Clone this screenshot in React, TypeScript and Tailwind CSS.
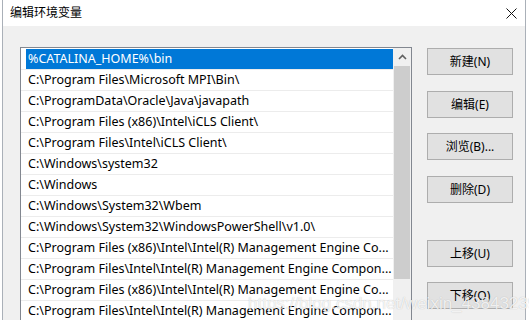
import React from 'react';

const rows = [
  '%CATALINA_HOME%\\bin',
  'C:\\Program Files\\Microsoft MPI\\Bin\\',
  'C:\\ProgramData\\Oracle\\Java\\javapath',
  'C:\\Program Files (x86)\\Intel\\iCLS Client\\',
  'C:\\Program Files\\Intel\\iCLS Client\\',
  'C:\\Windows\\system32',
  'C:\\Windows',
  'C:\\Windows\\System32\\Wbem',
  'C:\\Windows\\System32\\WindowsPowerShell\\v1.0\\',
  'C:\\Program Files (x86)\\Intel\\Intel(R) Management Engine Co...',
  'C:\\Program Files\\Intel\\Intel(R) Management Engine Compon...',
  'C:\\Program Files (x86)\\Intel\\Intel(R) Management Engine Co...',
  'C:\\Program Files\\Intel\\Intel(R) Management Engine Compon...',
];

const buttons = [
  { label: '新建(N)', mt: 'mt-[1px]' },
  { label: '编辑(E)', mt: 'mt-[16px]' },
  { label: '浏览(B)...', mt: 'mt-[15px]' },
  { label: '删除(D)', mt: 'mt-[16px]' },
  { label: '上移(U)', mt: 'mt-[37px]' },
  { label: '下移(O)', mt: 'mt-[15px]' },
];

const font = { fontFamily: '"Noto Sans", "Noto Sans CJK SC", sans-serif' };

export default function App() {
  return (
    <div className="relative w-[529px] h-[320px] overflow-hidden bg-white pl-[2px]" style={font}>
      <div className="w-[524px] h-[320px] border-l border-r border-[#aab0b8] flex flex-col">
        {/* title bar */}
        <div className="h-[26px] bg-white flex items-center justify-between pl-[7px] pr-[8px] shrink-0">
          <span className="text-[12px] text-black leading-none">编辑环境变量</span>
          <svg width="11" height="11" viewBox="0 0 11 11" className="mt-[1px]">
            <path d="M0.5 0.5 L10.5 10.5 M10.5 0.5 L0.5 10.5" stroke="#111" strokeWidth="1" />
          </svg>
        </div>

        {/* body */}
        <div className="flex-1 bg-[#f0f0f0] flex items-start pt-[21px] pl-[17px]">
          {/* list box */}
          <div className="w-[392px] h-[300px] border border-[#828790] bg-white flex">
            <div className="w-[372px] pt-[1px]">
              {rows.map((r, i) => (
                <div key={i} className="h-[21px] border-b border-[#ececec]">
                  {i === 0 ? (
                    <div className="ml-[5px] h-[20px] bg-[#0078d7] text-white text-[12.5px] leading-[20px] pl-[2px] whitespace-nowrap">
                      {r}
                    </div>
                  ) : (
                    <div className="ml-[5px] h-[20px] text-black text-[12.5px] leading-[20px] pl-[2px] whitespace-nowrap overflow-hidden">
                      {r}
                    </div>
                  )}
                </div>
              ))}
            </div>
            {/* scrollbar */}
            <div className="w-[18px] bg-[#f0f0f0] flex flex-col">
              <div className="h-[18px] flex items-center justify-center">
                <svg width="9" height="6" viewBox="0 0 9 6">
                  <path d="M1 5 L4.5 1.5 L8 5" stroke="#606060" strokeWidth="1.6" fill="none" />
                </svg>
              </div>
              <div className="mx-[1px] h-[213px] bg-[#cdcdcd]" />
            </div>
          </div>

          {/* buttons */}
          <div className="ml-[15px] flex flex-col">
            {buttons.map((b) => (
              <div
                key={b.label}
                className={`${b.mt} w-[86px] h-[27px] bg-[#e1e1e1] border border-[#adadad] flex items-center justify-center text-[12px] text-black`}
              >
                {b.label}
              </div>
            ))}
          </div>
        </div>
      </div>

      {/* watermark */}
      <div
        className="absolute left-[248px] top-[291px] text-[17px] text-white/80 whitespace-nowrap"
        style={{ fontFamily: '"Liberation Sans", Arial, sans-serif', textShadow: '0 0 1px rgba(0,0,0,0.25)' }}
      >
        https://blog.csdn.net/weixin_43843239
      </div>
    </div>
  );
}
